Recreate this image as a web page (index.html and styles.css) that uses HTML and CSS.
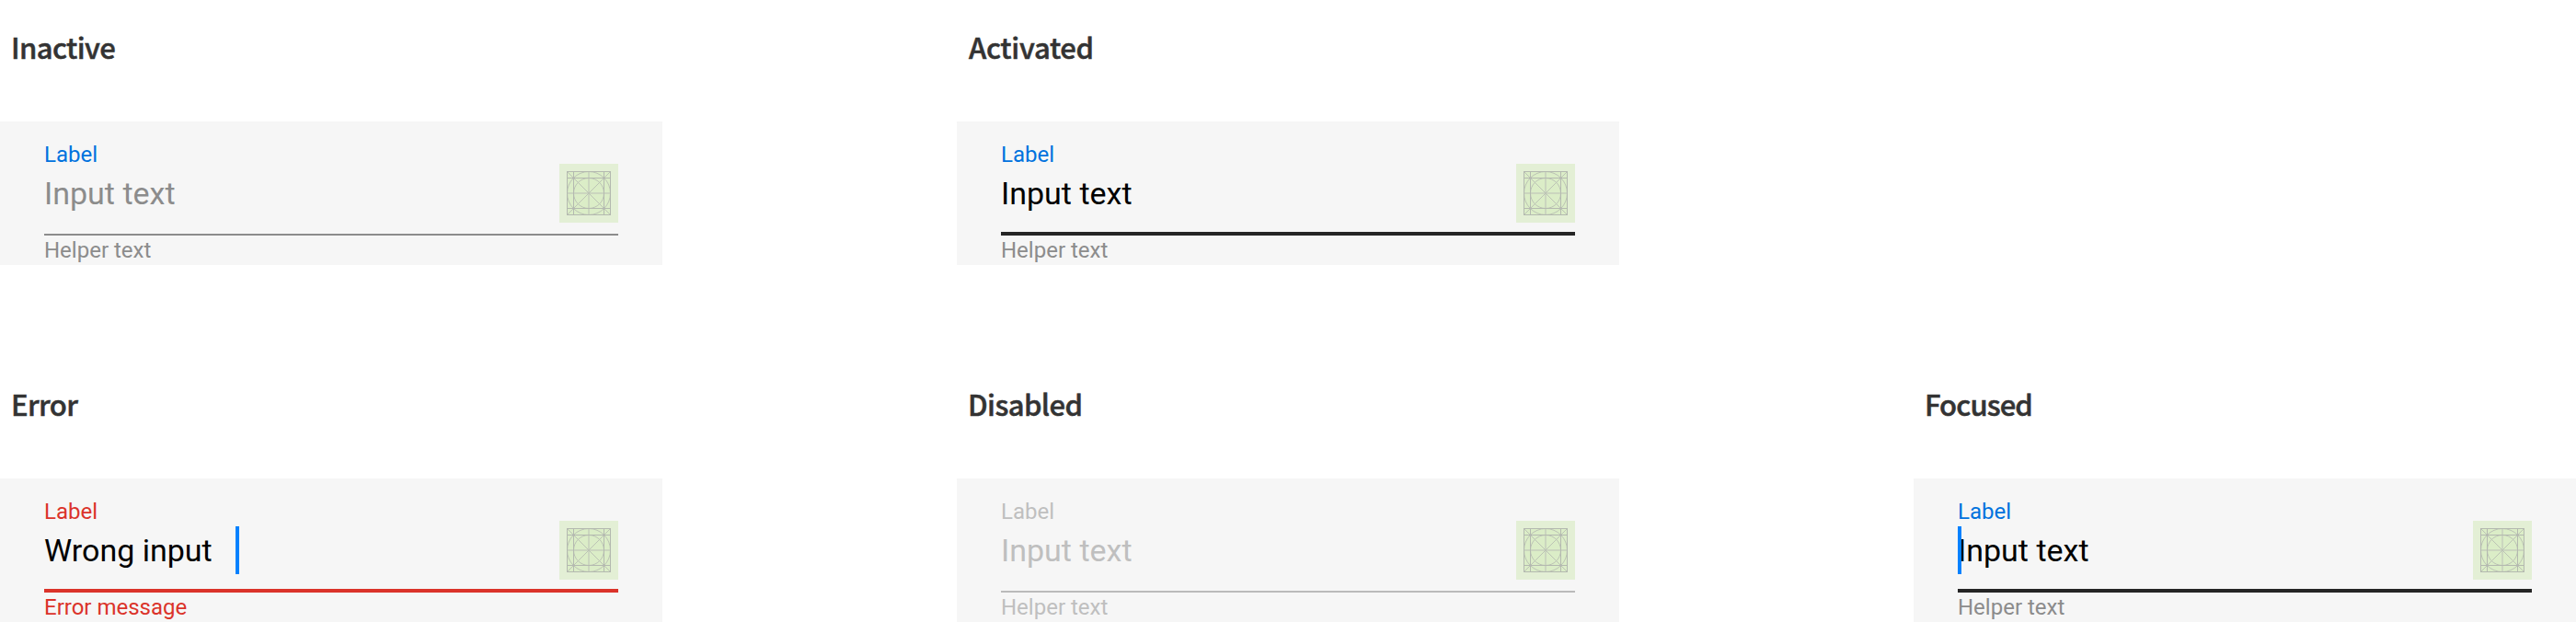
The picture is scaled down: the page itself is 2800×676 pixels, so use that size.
FILE: index.html
```html
<!DOCTYPE html>
<html lang="en">
<head>
<meta charset="utf-8">
<title>Text field states</title>
<link rel="stylesheet" href="styles.css">
</head>
<body>
<svg class="defs" width="0" height="0" aria-hidden="true">
  <symbol id="keyline" viewBox="0 0 64 64">
    <rect width="64" height="64" fill="#e3efd5"/>
    <rect x="8" y="8" width="48" height="48" fill="#dbedc7"/>
    <g fill="none" stroke="#b4b9b0" stroke-width="1">
      <path d="M32 8v48M8 32h48" stroke="#cbd6bf" stroke-width="2"/>
      <path d="M8 8l48 48M56 8L8 56" stroke="#bcc3b5"/>
      <circle cx="32" cy="32" r="23.5" stroke="#bcc3b5"/>
      <circle cx="32" cy="32" r="16.5" stroke="#bcc3b5"/>
      <rect x="8.5" y="8.5" width="47" height="47"/>
      <path d="M15.5 8v48M48.5 8v48M8 15.5h48M8 48.5h48"/>
    </g>
  </symbol>
</svg>
<main class="states">
  <section class="state">
    <h2 class="title">Inactive</h2>
    <div class="field">
      <div class="control">
        <div class="texts"><div class="label">Label</div><div class="value">Input text</div></div>
        <svg class="icon"><use href="#keyline"/></svg>
      </div>
      <div class="helper">Helper text</div>
    </div>
  </section>
  <section class="state activated">
    <h2 class="title">Activated</h2>
    <div class="field">
      <div class="control">
        <div class="texts"><div class="label">Label</div><div class="value">Input text</div></div>
        <svg class="icon"><use href="#keyline"/></svg>
      </div>
      <div class="helper">Helper text</div>
    </div>
  </section>
  <section class="state error">
    <h2 class="title">Error</h2>
    <div class="field">
      <div class="control">
        <div class="texts"><div class="label">Label</div><div class="value">Wrong input<span class="caret"></span></div></div>
        <svg class="icon"><use href="#keyline"/></svg>
      </div>
      <div class="helper">Error message</div>
    </div>
  </section>
  <section class="state disabled">
    <h2 class="title">Disabled</h2>
    <div class="field">
      <div class="control">
        <div class="texts"><div class="label">Label</div><div class="value">Input text</div></div>
        <svg class="icon"><use href="#keyline"/></svg>
      </div>
      <div class="helper">Helper text</div>
    </div>
  </section>
  <section class="state focused">
    <h2 class="title">Focused</h2>
    <div class="field">
      <div class="control">
        <div class="texts"><div class="label">Label</div><div class="value"><span class="caret"></span>Input text</div></div>
        <svg class="icon"><use href="#keyline"/></svg>
      </div>
      <div class="helper">Helper text</div>
    </div>
  </section>
</main>
</body>
</html>
```
FILE: styles.css
```css
* { box-sizing: border-box; }
body {
  margin: 0;
  height: 676px;
  overflow: hidden;
  background: #fff;
  font-family: Roboto, "Liberation Sans", sans-serif;
}
.defs { display: block; }
.states {
  display: grid;
  grid-template-columns: repeat(3, 720px);
  grid-auto-rows: 288px;
  gap: 100px 320px;
}
.error { grid-column: 1; }
.state { display: flex; flex-direction: column; }
.title {
  margin: 0;
  height: 132px;
  padding: 27px 0 0 12px;
  font: 500 31px/48px "Noto Sans CJK SC", "Noto Sans", sans-serif;
  letter-spacing: -0.6px;
  color: #333;
  -webkit-text-stroke: 0.5px #333;
}
.field { height: 156px; padding: 0 48px; background: #f6f6f6; }
.control {
  display: flex;
  justify-content: space-between;
  height: 124px;
  border-bottom: 2px solid #8c8c8c;
}
.texts { padding-top: 20px; }
.label { font-size: 24px; line-height: 32px; color: #0072de; }
.value { position: relative; font-size: 34px; line-height: 52px; color: #8c8c8c; white-space: nowrap; }
.icon { width: 64px; height: 64px; margin-top: 46px; }
.helper { font-size: 24px; line-height: 32px; color: #8c8c8c; }
.caret {
  position: absolute;
  top: 0;
  left: 0;
  width: 4px;
  height: 52px;
  background: #0381fe;
}
.activated .control, .focused .control { border-bottom: 4px solid #252525; }
.activated .value, .focused .value, .error .value { color: #000; }
.activated .title { padding-left: 13px; letter-spacing: -0.3px; }
.focused .title { letter-spacing: -0.9px; }
.error .control { border-bottom: 4px solid #db332a; }
.error .label, .error .helper { color: #db332a; }
.error .caret { left: 208px; }
.disabled .label, .disabled .value, .disabled .helper { color: #bfbfbf; }
.disabled .control { border-color: #bababa; }
```
